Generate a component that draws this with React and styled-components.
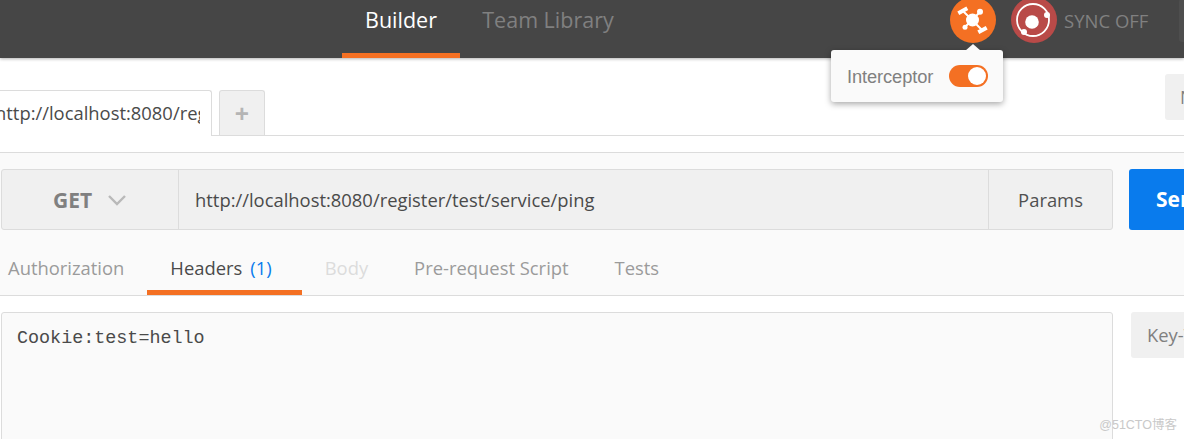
import React from 'react';
import styled, { createGlobalStyle } from 'styled-components';

const GlobalStyle = createGlobalStyle`
  html, body {
    margin: 0;
    padding: 0;
    background: #fff;
    overflow: hidden;
  }
  * {
    box-sizing: border-box;
  }
`;

const Page = styled.div`
  position: relative;
  width: 1184px;
  height: 439px;
  overflow: hidden;
  font-family: 'Open Sans', sans-serif;
  background: #fff;
`;

const Header = styled.header`
  position: relative;
  z-index: 2;
  display: flex;
  align-items: stretch;
  height: 58px;
  padding-left: 342px;
  background: #464646;
  box-shadow: 0 1px 3px rgba(0, 0, 0, 0.3);
`;

const NavTab = styled.div`
  display: flex;
  align-items: center;
  justify-content: center;
  width: ${(p) => p.$width}px;
  height: 58px;
  padding-bottom: 14px;
  font-size: 21.5px;
  font-weight: ${(p) => (p.$active ? 500 : 400)};
  color: ${(p) => (p.$active ? '#fff' : '#808080')};
  border-bottom: 5px solid ${(p) => (p.$active ? '#f47023' : 'transparent')};
`;

const HeaderRight = styled.div`
  display: flex;
  align-items: flex-start;
  margin-left: auto;
  margin-right: -35px;
`;

const IconWrap = styled.div`
  position: relative;
  width: 46px;
  height: 46px;
  margin-top: -3px;
  margin-right: ${(p) => p.$gap || 0}px;
`;

const SyncText = styled.div`
  width: 115px;
  margin-left: 7px;
  height: 42px;
  line-height: 42px;
  font-size: 18.5px;
  color: #808080;
`;

const HeaderEdge = styled.div`
  width: 40px;
  height: 43px;
  margin-top: -1px;
  background: #4e4e4e;
  border-radius: 3px;
`;

const Popover = styled.div`
  position: absolute;
  top: 53px;
  left: -119px;
  display: flex;
  align-items: center;
  width: 172px;
  height: 52px;
  padding-left: 16px;
  background: #fafafa;
  border-radius: 3px;
  box-shadow: 0 2px 6px rgba(0, 0, 0, 0.35);
  font-family: 'Liberation Sans', Arial, sans-serif;
  font-size: 18.3px;
  letter-spacing: -0.1px;
  color: #808080;

  &::before {
    content: '';
    position: absolute;
    top: -6px;
    left: 134px;
    border-left: 8px solid transparent;
    border-right: 8px solid transparent;
    border-bottom: 7px solid #fafafa;
  }
`;

const PopoverLabel = styled.span`
  padding-top: 2px;
`;

const Toggle = styled.div`
  display: flex;
  justify-content: flex-end;
  align-items: center;
  width: 39px;
  height: 22px;
  margin-left: 16px;
  padding-right: 2px;
  background: #f47023;
  border-radius: 11px;

  &::after {
    content: '';
    width: 18px;
    height: 18px;
    border-radius: 50%;
    background: #fff;
  }
`;

const TabRow = styled.div`
  display: flex;
  align-items: flex-end;
  height: 78px;
  border-bottom: 1px solid #dcdcdc;
`;

const RequestTab = styled.div`
  flex: none;
  width: 236px;
  height: 46px;
  margin-left: -24px;
  margin-bottom: -1px;
  padding: 0 11px 0 18px;
  background: #fff;
  border: 1px solid #dcdcdc;
  border-bottom: 0;
  border-radius: 3px 3px 0 0;
  font-size: 18.4px;
  line-height: 44px;
  color: #4a4a4a;
  white-space: nowrap;
`;

const TabText = styled.div`
  overflow: hidden;
`;

const PlusTab = styled.div`
  display: flex;
  align-items: center;
  justify-content: center;
  width: 46px;
  height: 45px;
  margin-left: 7px;
  background: #f0f0f0;
  border: 1px solid #dcdcdc;
  border-bottom: 0;
  border-radius: 3px 3px 0 0;
  font-size: 25px;
  font-weight: 700;
  color: #b5b5b5;
`;

const EnvButton = styled.div`
  flex: none;
  align-self: flex-start;
  width: 100px;
  height: 46px;
  margin-top: 16px;
  margin-left: auto;
  margin-right: -81px;
  padding-left: 15px;
  background: #f0f0f0;
  border-radius: 3px;
  line-height: 46px;
  font-size: 18px;
  white-space: nowrap;
  overflow: hidden;
  color: #808080;
`;

const RequestArea = styled.section`
  height: 144px;
  margin-top: 16px;
  padding: 16px 0 0 1px;
  border-top: 1px solid #dcdcdc;
  border-bottom: 1px solid #dcdcdc;
  background: #fafafa;
`;

const UrlRow = styled.div`
  display: flex;
  height: 61px;
`;

const UrlGroup = styled.div`
  display: flex;
  flex: none;
  width: 1112px;
  background: #f0f0f0;
  border: 1px solid #dcdcdc;
  border-radius: 3px;
  overflow: hidden;
`;

const MethodCell = styled.div`
  display: flex;
  align-items: center;
  flex: none;
  width: 177px;
  padding-left: 51px;
  border-right: 1px solid #dcdcdc;
  font-size: 21px;
  font-weight: 700;
  color: #808080;
`;

const Chevron = styled.svg`
  margin-left: 15px;
`;

const UrlCell = styled.div`
  flex: 1;
  padding-left: 16px;
  line-height: 59px;
  font-size: 18.4px;
  color: #4a4a4a;
`;

const ParamsCell = styled.div`
  flex: none;
  width: 124px;
  border-left: 1px solid #dcdcdc;
  text-align: center;
  line-height: 59px;
  font-size: 18.4px;
  color: #505050;
`;

const SendButton = styled.div`
  flex: none;
  width: 120px;
  margin-left: 16px;
  padding-left: 27px;
  background: #097bed;
  border-radius: 3px;
  line-height: 60px;
  font-size: 21px;
  font-weight: 700;
  color: #fff;
`;

const SubTabs = styled.nav`
  display: flex;
  height: 50px;
  margin: 15px 0 0 -16px;
`;

const SubTab = styled.div`
  height: 50px;
  padding: 0 23px 6px;
  line-height: 46px;
  font-size: 18.4px;
  white-space: nowrap;
  color: ${(p) => p.$color || '#9b9b9b'};
  border-bottom: 5px solid ${(p) => (p.$active ? '#f47023' : 'transparent')};
`;

const Count = styled.span`
  margin: 0 7px 0 8px;
  color: #097bed;
`;

const EditorRow = styled.div`
  display: flex;
  align-items: flex-start;
  padding: 16px 0 0 1px;
`;

const Editor = styled.div`
  flex: none;
  width: 1112px;
  height: 140px;
  padding: 14px 15px;
  background: #fafafa;
  border: 1px solid #dcdcdc;
  border-radius: 3px;
  font-family: 'Liberation Mono', 'Courier New', monospace;
  font-size: 18.4px;
  line-height: 24px;
  color: #4a4a4a;
`;

const KeyButton = styled.div`
  flex: none;
  width: 100px;
  height: 46px;
  margin-left: 18px;
  padding-left: 16px;
  background: #f0f0f0;
  border-radius: 3px;
  line-height: 46px;
  font-size: 18.4px;
  white-space: nowrap;
  color: #808080;
`;

const Watermark = styled.div`
  position: absolute;
  right: 7px;
  bottom: 6px;
  font-family: 'Liberation Sans', 'Noto Sans CJK SC', sans-serif;
  font-size: 12.5px;
  color: #c9c9c9;
`;

const InterceptorIcon = () => (
  <svg width="46" height="46" viewBox="0 0 46 46">
    <circle cx="23" cy="23" r="23" fill="#f47023" />
    <g stroke="#fff" fill="none">
      <path d="M22 23L13 14M22 23L32 33M22 23L30 15M22 23L15 30" strokeWidth="2" />
      <path d="M8.3 16.3L17.3 11.3M28.3 35.3L36.7 30.7" strokeWidth="4" />
    </g>
    <circle cx="22.5" cy="23" r="6.5" fill="#fff" />
    <circle cx="30" cy="14.7" r="3" fill="#fff" />
    <circle cx="15" cy="30.3" r="2.5" fill="#fff" />
  </svg>
);

const SyncIcon = () => (
  <svg width="46" height="46" viewBox="0 0 46 46">
    <circle cx="23" cy="23" r="23" fill="#b94a48" />
    <circle cx="22" cy="23" r="16" fill="none" stroke="#fff" strokeWidth="1.8" />
    <circle cx="21" cy="25" r="6.8" fill="#fff" />
    <circle cx="36" cy="18" r="3" fill="#fff" />
    <circle cx="13" cy="35" r="3" fill="#fff" />
  </svg>
);

const App = () => (
  <Page>
    <GlobalStyle />
    <Header>
      <NavTab $active $width={118}>Builder</NavTab>
      <NavTab $width={176}>Team Library</NavTab>
      <HeaderRight>
        <IconWrap $gap={15}>
          <InterceptorIcon />
          <Popover>
            <PopoverLabel>Interceptor</PopoverLabel>
            <Toggle />
          </Popover>
        </IconWrap>
        <IconWrap>
          <SyncIcon />
        </IconWrap>
        <SyncText>SYNC OFF</SyncText>
        <HeaderEdge />
      </HeaderRight>
    </Header>
    <TabRow>
      <RequestTab>
        <TabText>http://localhost:8080/register/test/service/ping</TabText>
      </RequestTab>
      <PlusTab>+</PlusTab>
      <EnvButton>No Environment</EnvButton>
    </TabRow>
    <RequestArea>
      <UrlRow>
        <UrlGroup>
          <MethodCell>
            GET
            <Chevron width="20" height="12" viewBox="0 0 20 12">
              <path d="M2 2l8 8 8-8" fill="none" stroke="#b9b9b9" strokeWidth="2.4" />
            </Chevron>
          </MethodCell>
          <UrlCell>http://localhost:8080/register/test/service/ping</UrlCell>
          <ParamsCell>Params</ParamsCell>
        </UrlGroup>
        <SendButton>Send</SendButton>
      </UrlRow>
      <SubTabs>
        <SubTab>Authorization</SubTab>
        <SubTab $active $color="#4a4a4a">
          Headers<Count>(1)</Count>
        </SubTab>
        <SubTab $color="#dcdcdc">Body</SubTab>
        <SubTab>Pre-request Script</SubTab>
        <SubTab>Tests</SubTab>
      </SubTabs>
    </RequestArea>
    <EditorRow>
      <Editor>Cookie:test=hello</Editor>
      <KeyButton>Key-Value Edit</KeyButton>
    </EditorRow>
    <Watermark>@51CTO博客</Watermark>
  </Page>
);

export default App;
